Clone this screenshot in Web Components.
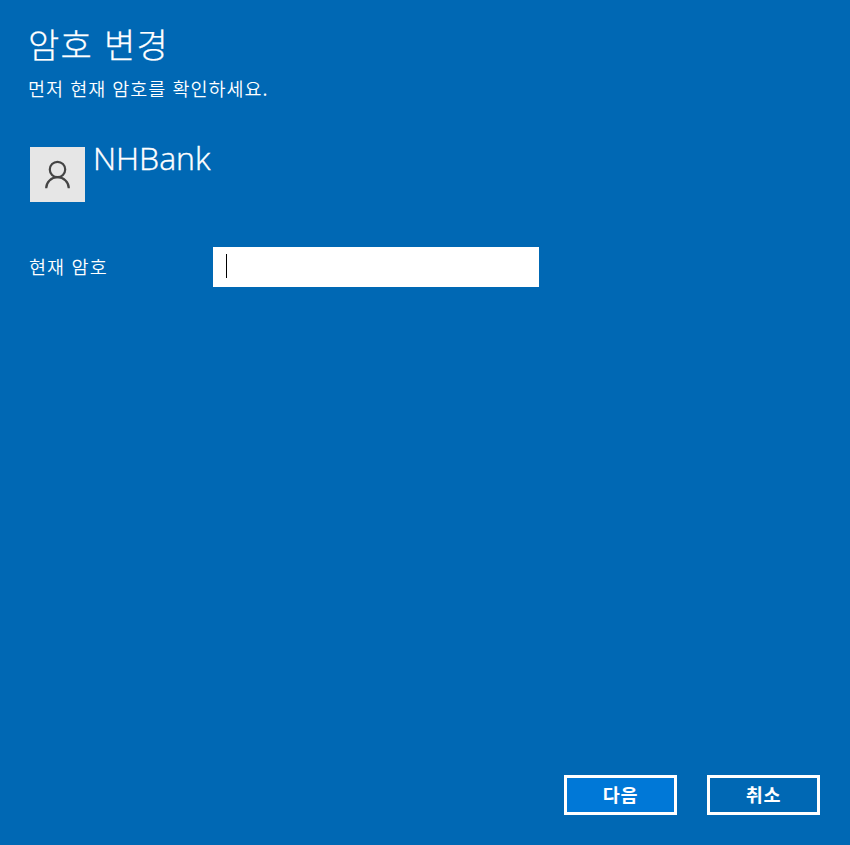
<!DOCTYPE html>
<html lang="ko"><head><meta charset="utf-8"><title>암호 변경</title>
<style>
html,body{margin:0;height:100%}
body{font-family:"Open Sans","Noto Sans CJK KR",sans-serif;color:#fff;background:#0068b4;overflow:hidden}
</style></head><body>
<password-page></password-page>
<script>
const define=(name,html)=>customElements.define(name,class extends HTMLElement{
  constructor(){super();this.attachShadow({mode:'open'}).innerHTML=html;}
});
define('page-heading',`<style>
:host{display:block;padding-left:28px}
h1{margin:0;font:300 34px/50px "Noto Sans CJK KR",sans-serif;letter-spacing:1.3px;-webkit-text-stroke:.25px #fff}
p{margin:6px 0 0;font:350 18.5px/26px "Noto Sans CJK KR",sans-serif;letter-spacing:.98px}
</style><h1><slot name="title"></slot></h1><p><slot></slot></p>`);
define('user-avatar',`<style>
:host{display:block;width:55px;height:55px;background:#e6e6e6}
svg{display:block}
</style><svg width="55" height="55" viewBox="0 0 55 55" fill="none" stroke="#444" stroke-width="2.2"><circle cx="27.5" cy="22.5" r="7.7"/><path d="M16.2 41.2a11.3 11 0 0 1 22.6 0"/></svg>`);
define('user-row',`<style>
:host{display:flex;gap:8px;align-items:flex-start}
user-avatar{margin-top:9px}
span{font:300 32px/40px "Open Sans",sans-serif;-webkit-text-stroke:.4px #fff}
</style><user-avatar></user-avatar><span><slot></slot></span>`);
define('password-field',`<style>
:host{display:grid;grid-template-columns:184px 326px;align-items:center}
label{font:350 18.5px/26px "Noto Sans CJK KR",sans-serif;letter-spacing:1.1px;padding-bottom:2px}
div{height:40px;background:#fff;display:flex;align-items:center;padding:0 0 2px 13px;box-sizing:border-box}
i{width:1px;height:24px;background:#000}
</style><label><slot></slot></label><div><i></i></div>`);
define('action-button',`<style>
:host{display:block}
button{display:flex;align-items:center;justify-content:center;width:113px;height:40px;box-sizing:border-box;padding:0 0 2px;border:3px solid #fff;background:var(--fill,transparent);color:#fff;font:700 18.5px/26px "Noto Sans CJK KR",sans-serif;letter-spacing:.8px}
</style><button><slot></slot></button>`);
define('password-page',`<style>
:host{display:flex;flex-direction:column;height:845px;box-sizing:border-box;padding:19px 30px 30px 0}
user-row{margin:37px 0 0 30px}
password-field{margin:45px 0 0 29px}
footer{display:flex;justify-content:flex-end;gap:30px;margin-top:auto}
</style><page-heading><span slot="title">암호 변경</span>먼저 현재 암호를 확인하세요.</page-heading>
<user-row>NHBank</user-row>
<password-field>현재 암호</password-field>
<footer><action-button style="--fill:#0078d7">다음</action-button><action-button>취소</action-button></footer>`);
</script></body></html>
